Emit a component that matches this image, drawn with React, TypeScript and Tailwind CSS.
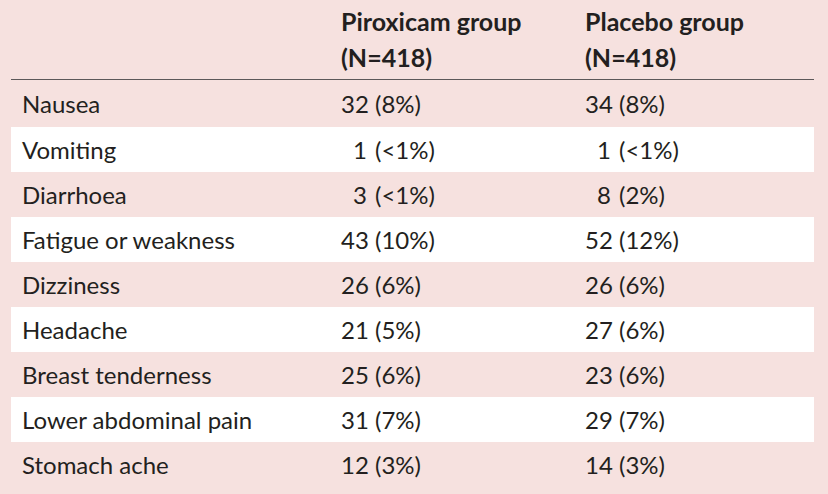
import React from 'react';

type Row = {
  label: string;
  piroxicam: [string, string];
  placebo: [string, string];
};

const ROWS: Row[] = [
  { label: 'Nausea', piroxicam: ['32', '(8%)'], placebo: ['34', '(8%)'] },
  { label: 'Vomiting', piroxicam: ['1', '(<1%)'], placebo: ['1', '(<1%)'] },
  { label: 'Diarrhoea', piroxicam: ['3', '(<1%)'], placebo: ['8', '(2%)'] },
  { label: 'Fatigue or weakness', piroxicam: ['43', '(10%)'], placebo: ['52', '(12%)'] },
  { label: 'Dizziness', piroxicam: ['26', '(6%)'], placebo: ['26', '(6%)'] },
  { label: 'Headache', piroxicam: ['21', '(5%)'], placebo: ['27', '(6%)'] },
  { label: 'Breast tenderness', piroxicam: ['25', '(6%)'], placebo: ['23', '(6%)'] },
  { label: 'Lower abdominal pain', piroxicam: ['31', '(7%)'], placebo: ['29', '(7%)'] },
  { label: 'Stomach ache', piroxicam: ['12', '(3%)'], placebo: ['14', '(3%)'] },
];

const Value = ({ v }: { v: [string, string] }) => (
  <div className="flex">
    <span className="inline-block w-[26px] text-right">{v[0]}</span>
    <span className="ml-[8px]">{v[1]}</span>
  </div>
);

const App: React.FC = () => {
  return (
    <div
      className="w-[828px] h-[494px] bg-[#f6e1df] text-[#231f20] text-[24px] pl-[11px] pr-[14px] overflow-hidden"
      style={{ fontFamily: 'Lato, "Open Sans", sans-serif' }}
    >
      <div className="grid grid-cols-[330px_244px_1fr] h-[80px] pt-[3px] border-b border-[#5c5859] font-bold text-[25px] leading-[36px]">
        <div />
        <div>
          <div>Piroxicam group</div>
          <div>(N=418)</div>
        </div>
        <div>
          <div>Placebo group</div>
          <div>(N=418)</div>
        </div>
      </div>
      {ROWS.map((row, i) => (
        <div
          key={row.label}
          className={`grid grid-cols-[330px_244px_1fr] items-center ${
            i === 0 ? 'h-[47px] leading-[47px]' : 'h-[45px] leading-[45px]'
          } ${i % 2 === 1 ? 'bg-white' : ''}`}
        >
          <div className="pl-[11px]">{row.label}</div>
          <Value v={row.piroxicam} />
          <Value v={row.placebo} />
        </div>
      ))}
    </div>
  );
};

export default App;
